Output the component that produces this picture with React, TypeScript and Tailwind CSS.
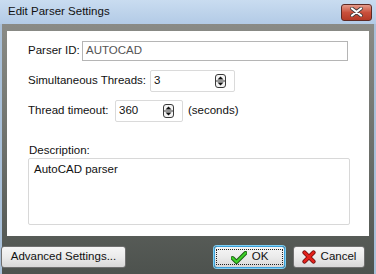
import React from "react";

function Spin() {
  return (
    <svg width="11" height="14" viewBox="0 0 11 14" className="shrink-0">
      <rect x="0.5" y="0.5" width="10" height="13" rx="2.5" fill="#f4f4f4" stroke="#3a3a3a" />
      <line x1="1" y1="7" x2="10" y2="7" stroke="#3a3a3a" />
      <path d="M2.5 5.5 L5.5 2.5 L8.5 5.5 Z" fill="#111" />
      <path d="M2.5 8.5 L5.5 11.5 L8.5 8.5 Z" fill="#111" />
    </svg>
  );
}

function Btn({ children, focus }: { children: React.ReactNode; focus?: boolean }) {
  return (
    <div
      className={
        "flex h-[22px] items-center justify-center whitespace-nowrap rounded-[3px] border bg-gradient-to-b from-[#f6f6f6] via-[#ebebeb] to-[#d8d8d8] text-[11.5px] text-[#111] " +
        (focus ? "border-[#3c9fd8] shadow-[0_0_0_1px_#7fd0f4]" : "border-[#707070]")
      }
    >
      {children}
    </div>
  );
}

export default function App() {
  return (
    <div
      className="flex h-[274px] w-[376px] flex-col overflow-hidden bg-[#a9c0d9]"
      style={{ fontFamily: '"Liberation Sans", Arial, sans-serif' }}
    >
      {/* title bar */}
      <div className="flex h-[24px] items-center justify-between bg-gradient-to-b from-[#c9dcf0] to-[#b3cbe6] pl-[8px] pr-[4px]">
        <span className="text-[11.5px] text-[#111]">Edit Parser Settings</span>
        <div className="flex h-[17px] w-[31px] items-center justify-center rounded-[3px] border border-[#5e2a24] bg-gradient-to-b from-[#e49a8a] via-[#c9503c] to-[#b43a26]">
          <svg width="13" height="10" viewBox="0 0 13 10">
            <path d="M2 1.5 L11 8.5 M11 1.5 L2 8.5" stroke="#3a3a3a" strokeWidth="3.6" strokeLinecap="round" />
            <path d="M2 1.5 L11 8.5 M11 1.5 L2 8.5" stroke="#fff" strokeWidth="2.2" strokeLinecap="round" />
          </svg>
        </div>
      </div>

      {/* body */}
      <div className="mx-[2px] flex flex-1 flex-col bg-gradient-to-b from-[#8a8b86] via-[#6d706b] to-[#4d524e] px-[5px] pt-[7px]">
        <div className="flex h-[205px] flex-col whitespace-nowrap bg-white pl-[21px] pt-[10px] text-[11.5px] text-[#111]">
          <div className="flex h-[20px] items-center">
            <span className="w-[54px] shrink-0">Parser ID:</span>
            <div className="flex h-[20px] w-[266px] items-center border border-[#b5b5b5] pl-[3px] text-[#555]">AUTOCAD</div>
          </div>
          <div className="mt-[9px] flex h-[22px] items-center">
            <span className="w-[122px] shrink-0">Simultaneous Threads:</span>
            <div className="flex h-[22px] w-[85px] items-center justify-between rounded-[2px] border border-[#dadada] pl-[3px] pr-[8px]">
              <span>3</span>
              <Spin />
            </div>
          </div>
          <div className="mt-[8px] flex h-[22px] items-center">
            <span className="w-[87px] shrink-0">Thread timeout:</span>
            <div className="flex h-[22px] w-[68px] items-center justify-between rounded-[2px] border border-[#dadada] pl-[3px] pr-[8px]">
              <span>360</span>
              <Spin />
            </div>
            <span className="ml-[5px]">(seconds)</span>
          </div>
          <div className="mt-[21px] pl-[1px] leading-[14px]">Description:</div>
          <div className="mt-[1px] h-[67px] w-[322px] rounded-[2px] border border-[#d8d8d8] pl-[5px] pt-[2px]">AutoCAD parser</div>
        </div>

        {/* footer */}
        <div className="mt-[10px] flex items-center">
          <div className="-ml-[6px] w-[125px]">
            <Btn>Advanced Settings...</Btn>
          </div>
          <div className="ml-[88px] w-[71px]">
            <Btn focus>
              <div className="flex h-[16px] items-center gap-[5px] border border-dotted border-[#222] px-[14px]">
                <svg width="16" height="13" viewBox="0 0 16 13">
                  <path d="M1.5 7 L5.5 11 L14.5 2" fill="none" stroke="#1b5d12" strokeWidth="4" strokeLinecap="round" strokeLinejoin="round" />
                  <path d="M1.5 7 L5.5 11 L14.5 2" fill="none" stroke="#3ed12a" strokeWidth="2.2" strokeLinecap="round" strokeLinejoin="round" />
                </svg>
                <span>OK</span>
              </div>
            </Btn>
          </div>
          <div className="ml-[8px] w-[72px]">
            <Btn>
              <div className="flex items-center gap-[5px]">
                <svg width="14" height="14" viewBox="0 0 14 14">
                  <path d="M2.5 2.5 L11.5 11.5 M11.5 2.5 L2.5 11.5" stroke="#6b0a0a" strokeWidth="4.2" strokeLinecap="round" />
                  <path d="M2.5 2.5 L11.5 11.5 M11.5 2.5 L2.5 11.5" stroke="#e3221c" strokeWidth="2.6" strokeLinecap="round" />
                </svg>
                <span>Cancel</span>
              </div>
            </Btn>
          </div>
        </div>
      </div>
    </div>
  );
}
